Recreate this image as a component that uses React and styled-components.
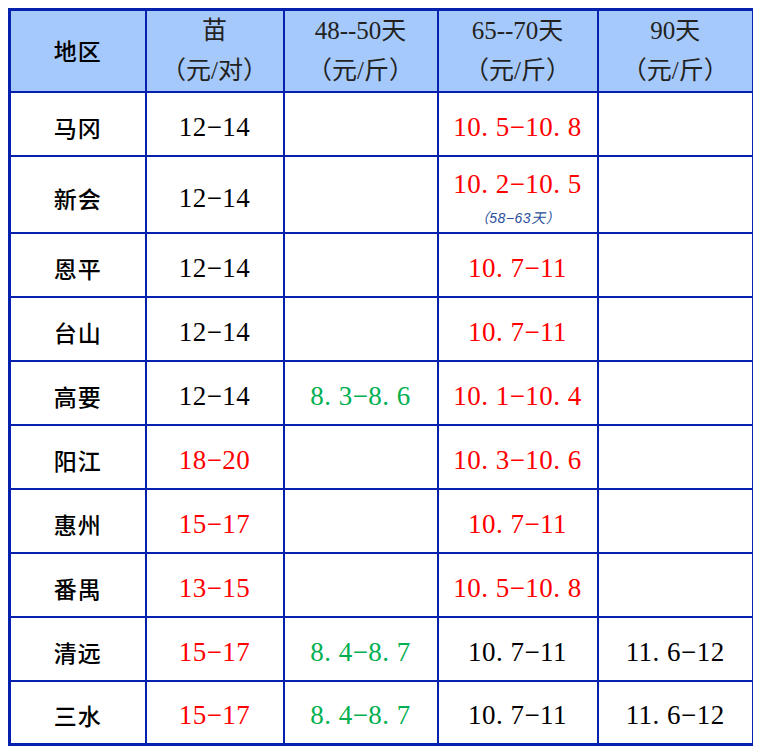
import styled, { createGlobalStyle } from 'styled-components';

const GlobalStyle = createGlobalStyle`
    body {
        margin: 8px;
        background: #fff;
        font-family: "Liberation Serif", "Noto Sans CJK SC", serif;
    }
`;

const rows = [
    { area: "马冈", seed: "12−14", a: "", b: "10. 5−10. 8", bRed: true, c: "" },
    { area: "新会", seed: "12−14", a: "", b: "10. 2−10. 5", bRed: true, c: "", note: "（58−63天）", tall: true },
    { area: "恩平", seed: "12−14", a: "", b: "10. 7−11", bRed: true, c: "" },
    { area: "台山", seed: "12−14", a: "", b: "10. 7−11", bRed: true, c: "" },
    { area: "高要", seed: "12−14", a: "8. 3−8. 6", b: "10. 1−10. 4", bRed: true, c: "" },
    { area: "阳江", seed: "18−20", seedRed: true, a: "", b: "10. 3−10. 6", bRed: true, c: "" },
    { area: "惠州", seed: "15−17", seedRed: true, a: "", b: "10. 7−11", bRed: true, c: "" },
    { area: "番禺", seed: "13−15", seedRed: true, a: "", b: "10. 5−10. 8", bRed: true, c: "" },
    { area: "清远", seed: "15−17", seedRed: true, a: "8. 4−8. 7", b: "10. 7−11", c: "11. 6−12" },
    { area: "三水", seed: "15−17", seedRed: true, a: "8. 4−8. 7", b: "10. 7−11", c: "11. 6−12", last: true },
];

export default function App() {
    return (
        <>
            <GlobalStyle />
            <PriceTable>
                <colgroup>
                    <col style={{ width: 136 }} />
                    <col style={{ width: 138 }} />
                    <col style={{ width: 154 }} />
                    <col style={{ width: 160 }} />
                    <col style={{ width: 156 }} />
                </colgroup>
                <thead>
                    <tr>
                        <HeadCell><Area>地区</Area></HeadCell>
                        <HeadCell>苗<br />（元/对）</HeadCell>
                        <HeadCell>48--50天<br />（元/斤）</HeadCell>
                        <HeadCell>65--70天<br />（元/斤）</HeadCell>
                        <HeadCell>90天<br />（元/斤）</HeadCell>
                    </tr>
                </thead>
                <tbody>
                    {rows.map(r => (
                        <Row key={r.area} $h={r.tall ? 77 : r.last ? 63 : 64}>
                            <Cell><Area>{r.area}</Area></Cell>
                            <Cell><Num $color={r.seedRed ? "red" : "black"}>{r.seed}</Num></Cell>
                            <Cell><Num $color="green">{r.a}</Num></Cell>
                            <Cell>
                                <Num $color={r.bRed ? "red" : "black"}>{r.b}</Num>
                                {r.note && <Note>{r.note}</Note>}
                            </Cell>
                            <Cell><Num $color="black">{r.c}</Num></Cell>
                        </Row>
                    ))}
                </tbody>
            </PriceTable>
        </>
    )
}

/* --- STYLES --- */
const colors = {
    red: "#ff0000",
    green: "#00b050",
    black: "#000000",
};

const PriceTable = styled.table`
    width: 745px;
    table-layout: fixed;
    border-collapse: collapse;
    border: 3px solid #0521ad;
`;

const HeadCell = styled.th`
    height: 80px;
    padding: 0;
    background: #a6c9fb;
    border: 2px solid #0521ad;
    font-family: "Liberation Serif", "Noto Sans CJK SC", serif;
    font-weight: 400;
    font-size: 25px;
    line-height: 40px;
    color: #222;
    text-align: center;
    vertical-align: middle;
`;

const Row = styled.tr`
    height: ${p => p.$h}px;
`;

const Cell = styled.td`
    padding: 0;
    padding-top: 6px;
    border: 2px solid #0521ad;
    text-align: center;
    vertical-align: middle;
`;

const Area = styled.span`
    font-family: "Noto Sans CJK SC", sans-serif;
    font-weight: 500;
    font-size: 23px;
    color: #000;
    letter-spacing: 1px;
`;

const Num = styled.div`
    font-family: "Liberation Serif", serif;
    font-size: 27px;
    line-height: 30px;
    letter-spacing: 0.5px;
    color: ${p => colors[p.$color]};
`;

const Note = styled.div`
    margin-top: 11px;
    font-family: "Liberation Sans", "Noto Sans CJK SC", sans-serif;
    font-style: italic;
    font-size: 14px;
    line-height: 16px;
    letter-spacing: 0.5px;
    color: #2a4f9c;
`;
